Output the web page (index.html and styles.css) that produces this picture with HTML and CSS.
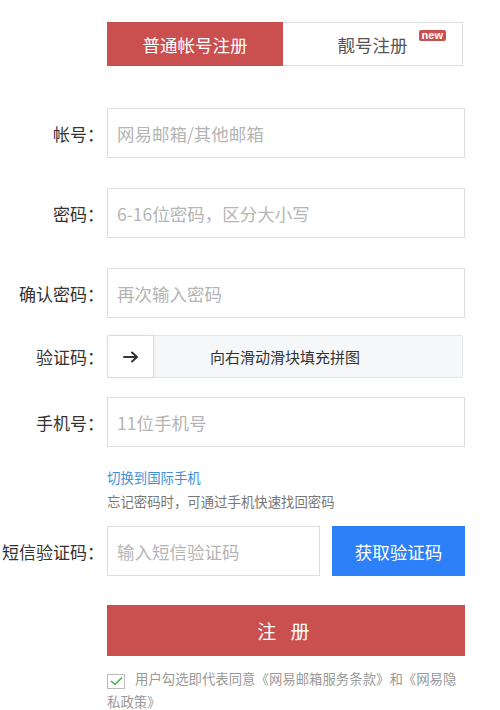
FILE: index.html
```html
<!DOCTYPE html>
<html lang="zh-CN">
<head>
    <meta charset="UTF-8">
    <meta name="viewport" content="width=device-width, initial-scale=1.0">
    <title>注册网易邮箱</title>
    <link rel="stylesheet" href="styles.css">
</head>
<body>
    <div class="page">
        <div class="tabs">
            <div class="tab tab-active">普通帐号注册</div>
            <div class="tab">靓号注册<span class="badge-new">new</span></div>
        </div>

        <form class="reg-form" onsubmit="return false;">
            <div class="row row-account">
                <label class="row-label" for="account">帐号<span class="colon">：</span></label>
                <input class="text-input" id="account" type="text" placeholder="网易邮箱/其他邮箱">
            </div>

            <div class="row row-password">
                <label class="row-label" for="password">密码<span class="colon">：</span></label>
                <input class="text-input" id="password" type="password" placeholder="6-16位密码，区分大小写">
            </div>

            <div class="row row-confirm">
                <label class="row-label" for="confirm">确认密码<span class="colon">：</span></label>
                <input class="text-input" id="confirm" type="password" placeholder="再次输入密码">
            </div>

            <div class="row row-captcha">
                <span class="row-label">验证码<span class="colon">：</span></span>
                <div class="slider">
                    <div class="slider-thumb">
                        <svg width="16" height="12" viewBox="0 0 16 12">
                            <path d="M1 6 H14 M9 1.5 L14 6 L9 10.5" fill="none" stroke="#333" stroke-width="2" stroke-linecap="round" stroke-linejoin="round"/>
                        </svg>
                    </div>
                    <span class="slider-text">向右滑动滑块填充拼图</span>
                </div>
            </div>

            <div class="row row-phone">
                <label class="row-label" for="phone">手机号<span class="colon">：</span></label>
                <input class="text-input" id="phone" type="text" placeholder="11位手机号">
            </div>

            <div class="phone-notes">
                <a class="switch-link" href="#">切换到国际手机</a>
                <p class="note">忘记密码时，可通过手机快速找回密码</p>
            </div>

            <div class="row row-sms">
                <label class="row-label" for="sms">短信验证码<span class="colon">：</span></label>
                <input class="text-input sms-input" id="sms" type="text" placeholder="输入短信验证码">
                <button class="sms-btn" type="button">获取验证码</button>
            </div>

            <div class="submit-wrap">
                <button class="submit-btn" type="submit">注 册</button>
                <p class="agree">
                    <span class="check">
                        <svg width="13" height="10" viewBox="0 0 13 10">
                            <path d="M1 5 L5 8.5 L12 1.5" fill="none" stroke="#4caf50" stroke-width="1.6"/>
                        </svg>
                    </span>用户勾选即代表同意《网易邮箱服务条款》和《网易隐私政策》
                </p>
            </div>
        </form>
    </div>
</body>
</html>
```

FILE: styles.css
```css
* { box-sizing: border-box; }
body { margin: 0; background: #fff; font-family: "Noto Sans CJK SC", "Liberation Sans", sans-serif; color: #333; }
.page { width: 500px; padding-top: 22px; }

.tabs { display: flex; margin-left: 107px; width: 356px; height: 44px; }
.tab { position: relative; flex: 0 0 180px; display: flex; align-items: center; justify-content: center; font-size: 17.5px; color: #555; border: 1px solid #ddd; border-left: none; }
.tab-active { flex-basis: 176px; background: #c9504f; color: #fff; border: none; }
.badge-new { position: absolute; top: 7px; right: 16px; padding: 0 3px; height: 11px; line-height: 10px; font-size: 11px; font-family: "Liberation Sans", sans-serif; font-weight: bold; color: #fff; background: #c9504f; border-radius: 2px; }

.row { display: flex; align-items: center; }
.row-label { flex: 0 0 104px; margin-right: 3px; text-align: right; font-size: 17px; color: #333; white-space: nowrap; }
.colon { font-family: "Noto Sans CJK JP", sans-serif; }
.row-account { margin-top: 42px; }
.row-password { margin-top: 30px; }
.row-confirm { margin-top: 30px; }
.row-captcha { margin-top: 17px; }
.row-phone { margin-top: 19px; }
.row-sms { margin-top: 13px; }

.text-input { width: 358px; height: 50px; padding: 0 9px; border: 1px solid #ddd; font-family: inherit; font-size: 17.5px; color: #333; outline: none; }
.text-input::placeholder { color: #b5b5b5; }

.slider { position: relative; width: 356px; height: 43px; display: flex; align-items: center; justify-content: center; background: #f6f7f9; border: 1px solid #e6e6e6; border-radius: 2px; }
.slider-thumb { position: absolute; left: -1px; top: -1px; width: 47px; height: 43px; display: flex; align-items: center; justify-content: center; background: #fff; border: 1px solid #ddd; border-radius: 2px; box-shadow: 0 0 3px rgba(0,0,0,0.08); }
.slider-text { font-size: 15px; color: #333; }

.phone-notes { margin-left: 107px; padding-top: 18px; font-size: 13.4px; line-height: 24px; }
.switch-link { color: #3f8fd8; text-decoration: none; }
.note { margin: 0; color: #777; }

.sms-input { width: 213px; }
.sms-btn { width: 133px; height: 50px; margin-left: 12px; border: none; background: #2d80f7; color: #fff; font-family: inherit; font-size: 17.5px; cursor: pointer; }

.submit-wrap { margin-left: 107px; width: 358px; padding-top: 29px; }
.submit-btn { display: block; width: 358px; height: 51px; border: none; background: #c9504f; color: #fff; font-family: inherit; font-size: 19px; letter-spacing: 5px; cursor: pointer; }
.agree { margin: 11px 0 0; font-size: 13.4px; line-height: 23px; color: #999; }
.check { display: inline-flex; align-items: center; justify-content: center; width: 18px; height: 15px; margin-right: 10px; vertical-align: -2px; border: 1px solid #bbb; }
```
